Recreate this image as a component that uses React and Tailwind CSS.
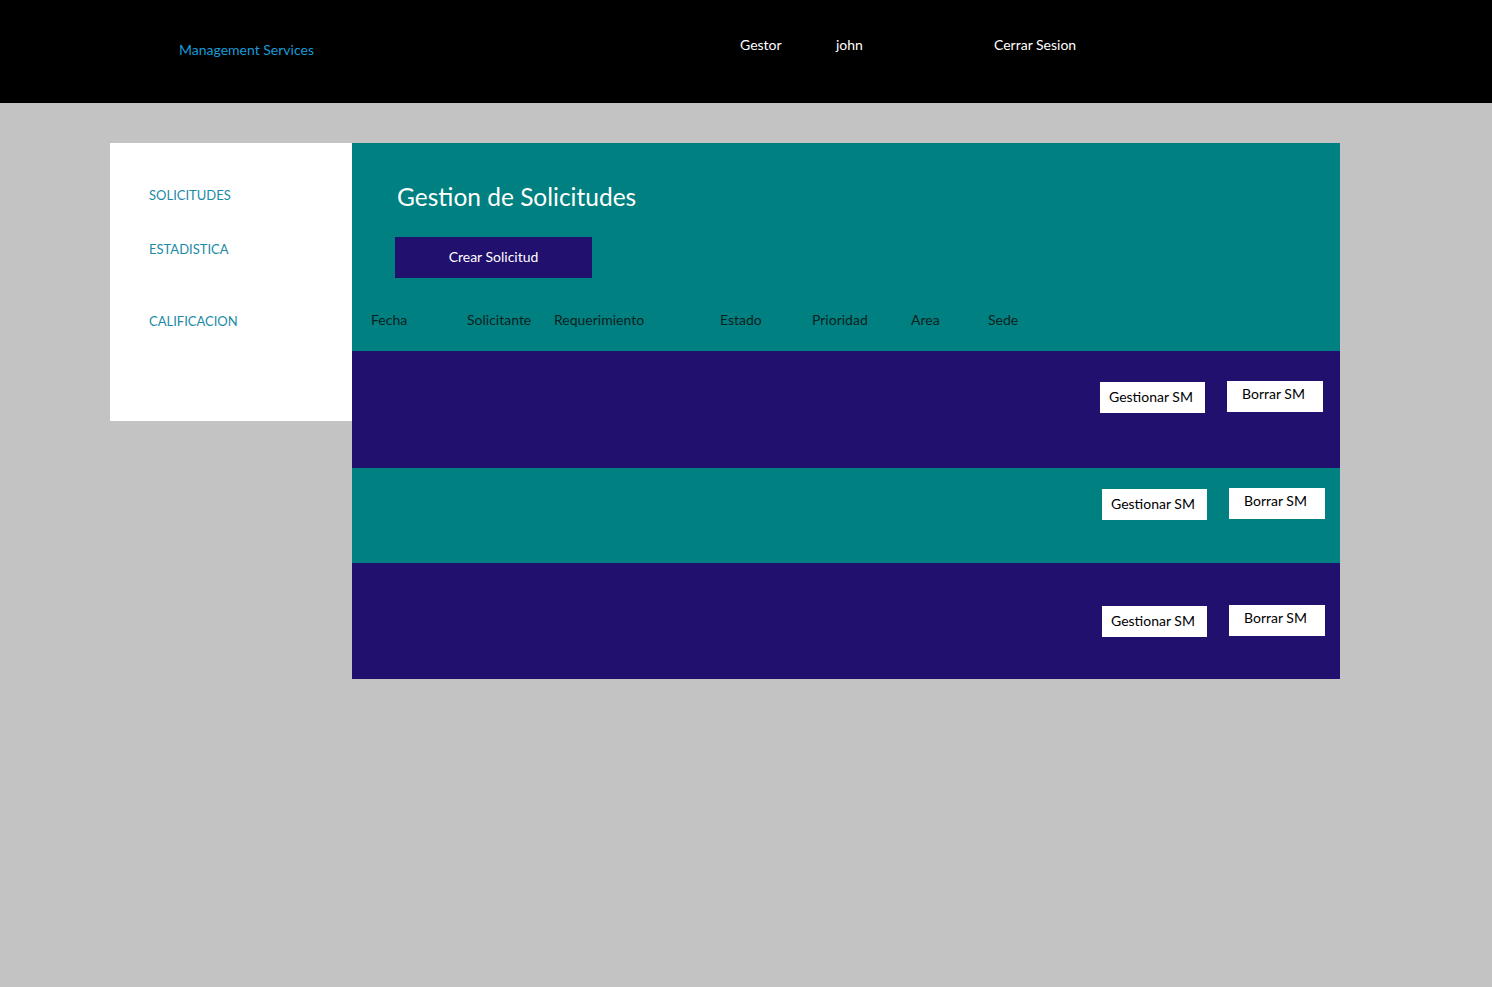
import React from 'react'

const COLUMNS = [
  { label: 'Fecha', width: 'w-[96px]' },
  { label: 'Solicitante', width: 'w-[87px]' },
  { label: 'Requerimiento', width: 'w-[166px]' },
  { label: 'Estado', width: 'w-[92px]' },
  { label: 'Prioridad', width: 'w-[99px]' },
  { label: 'Area', width: 'w-[77px]' },
  { label: 'Sede', width: 'w-[60px]' }
]

const ROWS = [
  { bg: 'bg-[#21106e]', height: 'h-[117px]', pad: 'pt-[30px] pr-[17px]' },
  { bg: 'bg-[#008080]', height: 'h-[95px]', pad: 'pt-[20px] pr-[15px]' },
  { bg: 'bg-[#21106e]', height: 'h-[116px]', pad: 'pt-[42px] pr-[15px]' }
]

function RowActions() {
  return (
    <div className="flex items-start gap-[22px]">
      <button className="mt-[1px] h-[31px] w-[105px] bg-white pl-[9px] pb-[3px] text-left text-[14px] text-black">Gestionar SM</button>
      <button className="h-[31px] w-[96px] bg-white pl-[15px] pb-[7px] text-left text-[14px] text-black">Borrar SM</button>
    </div>
  )
}

export default function App() {
  return (
    <div className="min-h-[987px] bg-[#c3c3c3] font-['Lato','Open_Sans',sans-serif]">
      <header className="flex h-[103px] items-start bg-black text-[14px]">
        <div className="ml-[179px] mt-[39px] w-[561px] text-[#1a9ad6]">Management Services</div>
        <div className="mt-[34px] w-[96px] text-white">Gestor</div>
        <div className="mt-[34px] w-[158px] text-white">john</div>
        <div className="mt-[34px] text-white">Cerrar Sesion</div>
      </header>

      <main className="ml-[110px] mt-[40px] flex items-start">
        <nav className="flex h-[278px] w-[242px] flex-col bg-white pl-[39px] text-[13px] text-[#1b8aa6]">
          <a className="mt-[43px]">SOLICITUDES</a>
          <a className="mt-[34px]">ESTADISTICA</a>
          <a className="mt-[53px]">CALIFICACION</a>
        </nav>

        <section className="w-[988px]">
          <div className="h-[208px] bg-[#008080]">
            <h1 className="pl-[45px] pt-[38px] text-[24.5px] leading-[32px] text-white">Gestion de Solicitudes</h1>
            <button className="ml-[43px] mt-[24px] h-[41px] w-[197px] bg-[#21106e] pb-[3px] text-[14px] text-white">Crear Solicitud</button>
            <div className="mt-[31px] flex pl-[19px] text-[14px] text-[#0b1f1f]">
              {COLUMNS.map((col) => (
                <div key={col.label} className={col.width}>{col.label}</div>
              ))}
            </div>
          </div>

          {ROWS.map((row, i) => (
            <div key={i} className={`flex justify-end ${row.bg} ${row.height} ${row.pad}`}>
              <RowActions />
            </div>
          ))}
        </section>
      </main>
    </div>
  )
}
